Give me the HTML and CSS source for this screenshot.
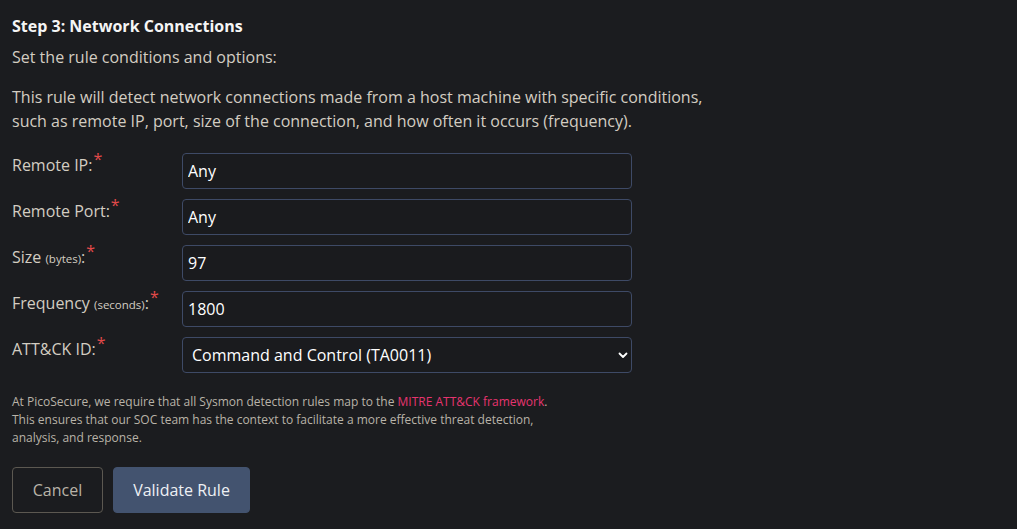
FILE: index.html
```html
<!DOCTYPE html>
<html>
<head>
<meta charset="utf-8">
<link rel="stylesheet" href="styles.css">
</head>
<body>
<div class="page">
  <h3 class="title">Step 3: Network Connections</h3>
  <p class="subtitle">Set the rule conditions and options:</p>
  <p class="desc">This rule will detect network connections made from a host machine with specific conditions,<br>such as remote IP, port, size of the connection, and how often it occurs (frequency).</p>
  <form class="form">
    <div class="row">
      <label class="label">Remote IP:<span class="req">*</span></label>
      <input class="field" type="text" value="Any">
    </div>
    <div class="row">
      <label class="label">Remote Port:<span class="req">*</span></label>
      <input class="field" type="text" value="Any">
    </div>
    <div class="row">
      <label class="label">Size <small>(bytes)</small>:<span class="req">*</span></label>
      <input class="field" type="text" value="97">
    </div>
    <div class="row">
      <label class="label">Frequency <small>(seconds)</small>:<span class="req">*</span></label>
      <input class="field" type="text" value="1800">
    </div>
    <div class="row">
      <label class="label">ATT&amp;CK ID:<span class="req">*</span></label>
      <div class="selectwrap">
        <select class="field select">
          <option>Command and Control (TA0011)</option>
        </select>
        <svg class="chev" width="10" height="8" viewBox="0 0 10 8"><path d="M1.5 2.5 L5 6 L8.5 2.5" fill="none" stroke="#ffffff" stroke-width="1.8" stroke-linecap="round" stroke-linejoin="round"/></svg>
      </div>
    </div>
  </form>
  <p class="note">At PicoSecure, we require that all Sysmon detection rules map to the <a class="link">MITRE ATT&amp;CK framework</a>.<br>This ensures that our SOC team has the context to facilitate a more effective threat detection,<br>analysis, and response.</p>
  <div class="actions">
    <button class="btn cancel" type="button">Cancel</button>
    <button class="btn primary" type="button">Validate Rule</button>
  </div>
</div>
</body>
</html>
```
FILE: styles.css
```css
html, body {
  margin: 0;
  padding: 0;
  background: #1b1c1f;
}
body {
  font-family: "Open Sans", "Noto Sans", sans-serif;
  color: #d3cdc2;
}
.page {
  padding: 15px 12px 0 12px;
}
.title {
  margin: 0;
  font-size: 16px;
  font-weight: 700;
  line-height: 22px;
  color: #f5f5f5;
}
.subtitle {
  margin: 8px 0 0 0;
  font-size: 16px;
  line-height: 24px;
}
.desc {
  margin: 16px 0 0 0;
  font-size: 16px;
  line-height: 24px;
}
.form {
  margin-top: 20px;
  display: flex;
  flex-direction: column;
  gap: 10px;
}
.row {
  display: flex;
  align-items: flex-start;
}
.label {
  width: 170px;
  font-size: 16px;
  line-height: 24px;
  padding-top: 0;
  color: #d3cdc2;
}
.label small {
  font-size: 11.5px;
}
.req {
  color: #e24a4a;
  position: relative;
  top: -6px;
  margin-left: 1px;
}
.field {
  box-sizing: border-box;
  width: 450px;
  height: 36px;
  background: #1a1b1e;
  border: 1px solid #3e4a66;
  border-radius: 4px;
  color: #ffffff;
  font-family: "Open Sans", "Noto Sans", sans-serif;
  font-size: 16px;
  padding: 0 5px;
  outline: none;
  margin: 0;
}
.selectwrap {
  position: relative;
  width: 450px;
  height: 36px;
}
.select {
  appearance: none;
  -webkit-appearance: none;
  padding-left: 9px;
}
.chev {
  position: absolute;
  right: 4px;
  top: 14px;
  pointer-events: none;
}
.note {
  margin: 20px 0 0 0;
  font-size: 12px;
  line-height: 18px;
  color: #b9b3a8;
}
.link {
  color: #e6346f;
}
.actions {
  margin-top: 20px;
  display: flex;
  gap: 10px;
}
.btn {
  height: 46px;
  border-radius: 4px;
  font-family: "Open Sans", "Noto Sans", sans-serif;
  font-size: 16px;
  padding: 0;
  white-space: nowrap;
  cursor: pointer;
}
.cancel {
  width: 91px;
  background: transparent;
  border: 1px solid #5c5851;
  color: #b9b3a8;
}
.primary {
  width: 137px;
  background: #43536f;
  border: 1px solid #43536f;
  color: #eef0f4;
}
```
